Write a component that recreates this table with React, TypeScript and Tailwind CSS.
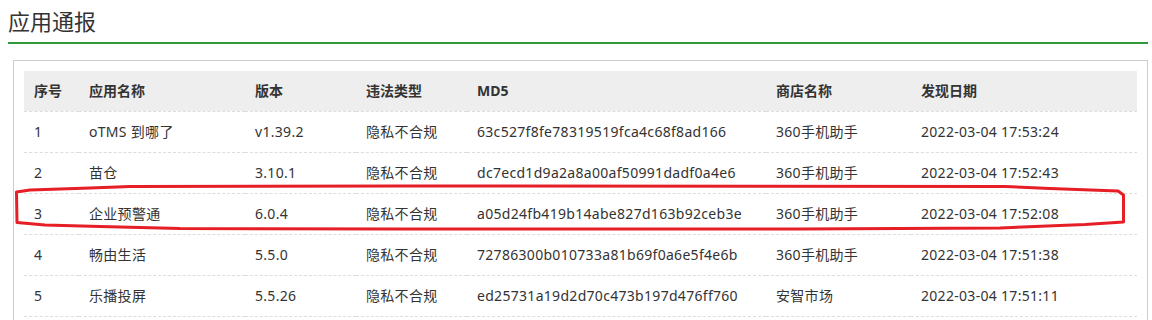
const columns = [
  { title: "序号", width: "w-[55px]" },
  { title: "应用名称", width: "w-[166px]" },
  { title: "版本", width: "w-[111px]" },
  { title: "违法类型", width: "w-[111px]" },
  { title: "MD5", width: "w-[299px]" },
  { title: "商店名称", width: "w-[145px]" },
  { title: "发现日期", width: "w-[226px]" },
];

const rows = [
  ["1", "oTMS 到哪了", "v1.39.2", "隐私不合规", "63c527f8fe78319519fca4c68f8ad166", "360手机助手", "2022-03-04 17:53:24"],
  ["2", "苗仓", "3.10.1", "隐私不合规", "dc7ecd1d9a2a8a00af50991dadf0a4e6", "360手机助手", "2022-03-04 17:52:43"],
  ["3", "企业预警通", "6.0.4", "隐私不合规", "a05d24fb419b14abe827d163b92ceb3e", "360手机助手", "2022-03-04 17:52:08"],
  ["4", "畅由生活", "5.5.0", "隐私不合规", "72786300b010733a81b69f0a6e5f4e6b", "360手机助手", "2022-03-04 17:51:38"],
  ["5", "乐播投屏", "5.5.26", "隐私不合规", "ed25731a19d2d70c473b197d476ff760", "安智市场", "2022-03-04 17:51:11"],
];

export default function App() {
  return (
    <div className="relative w-[1152px] h-[320px] overflow-hidden bg-white font-['Noto_Sans','Noto_Sans_CJK_SC',sans-serif] text-[#333]">
      <div className="pl-2 w-[1148px]">
        <h2 className="pt-[6px] h-[42px] text-[22px] leading-[30px] text-[#333]">应用通报</h2>
        <div className="h-[2px] bg-[#2e9a3a]" />

        <div className="mt-[16px] ml-[5px] border border-[#ccc] p-[10px] pr-[9px]">
          <table className="border-collapse table-fixed">
            <thead>
              <tr className="bg-[#eee] border-b border-dashed border-[#ddd]">
                {columns.map((c) => (
                  <th
                    key={c.title}
                    className={`${c.width} h-[40px] pl-[10px] text-left text-[14px] font-bold text-[#333]`}
                  >
                    {c.title}
                  </th>
                ))}
              </tr>
            </thead>
            <tbody>
              {rows.map((r) => (
                <tr key={r[0]} className="border-b border-dashed border-[#ddd]">
                  {r.map((cell, i) => (
                    <td
                      key={i}
                      className="h-[41px] pl-[10px] text-[14px] tracking-[0.3px] text-[#333] whitespace-nowrap"
                    >
                      {cell}
                    </td>
                  ))}
                </tr>
              ))}
            </tbody>
          </table>
        </div>
      </div>

      {/* hand-drawn highlight around row 3 */}
      <svg
        className="absolute left-0 top-0 pointer-events-none"
        width="1152"
        height="320"
        viewBox="0 0 1152 320"
      >
        <path
          d="M130 186.5 L400 186 L1005 186.5 L1050 188.5 L1118 191 L1123.5 195 L1123.5 222 L1085 224.5 L1000 228 L800 229 L400 229 L180 228.5 L100 226.5 L45 225 L17 222.5 L16.5 192 L30 190 L90 188 Z"
          fill="none"
          stroke="#e61e25"
          strokeWidth="3"
          strokeLinejoin="round"
        />
      </svg>
    </div>
  );
}
